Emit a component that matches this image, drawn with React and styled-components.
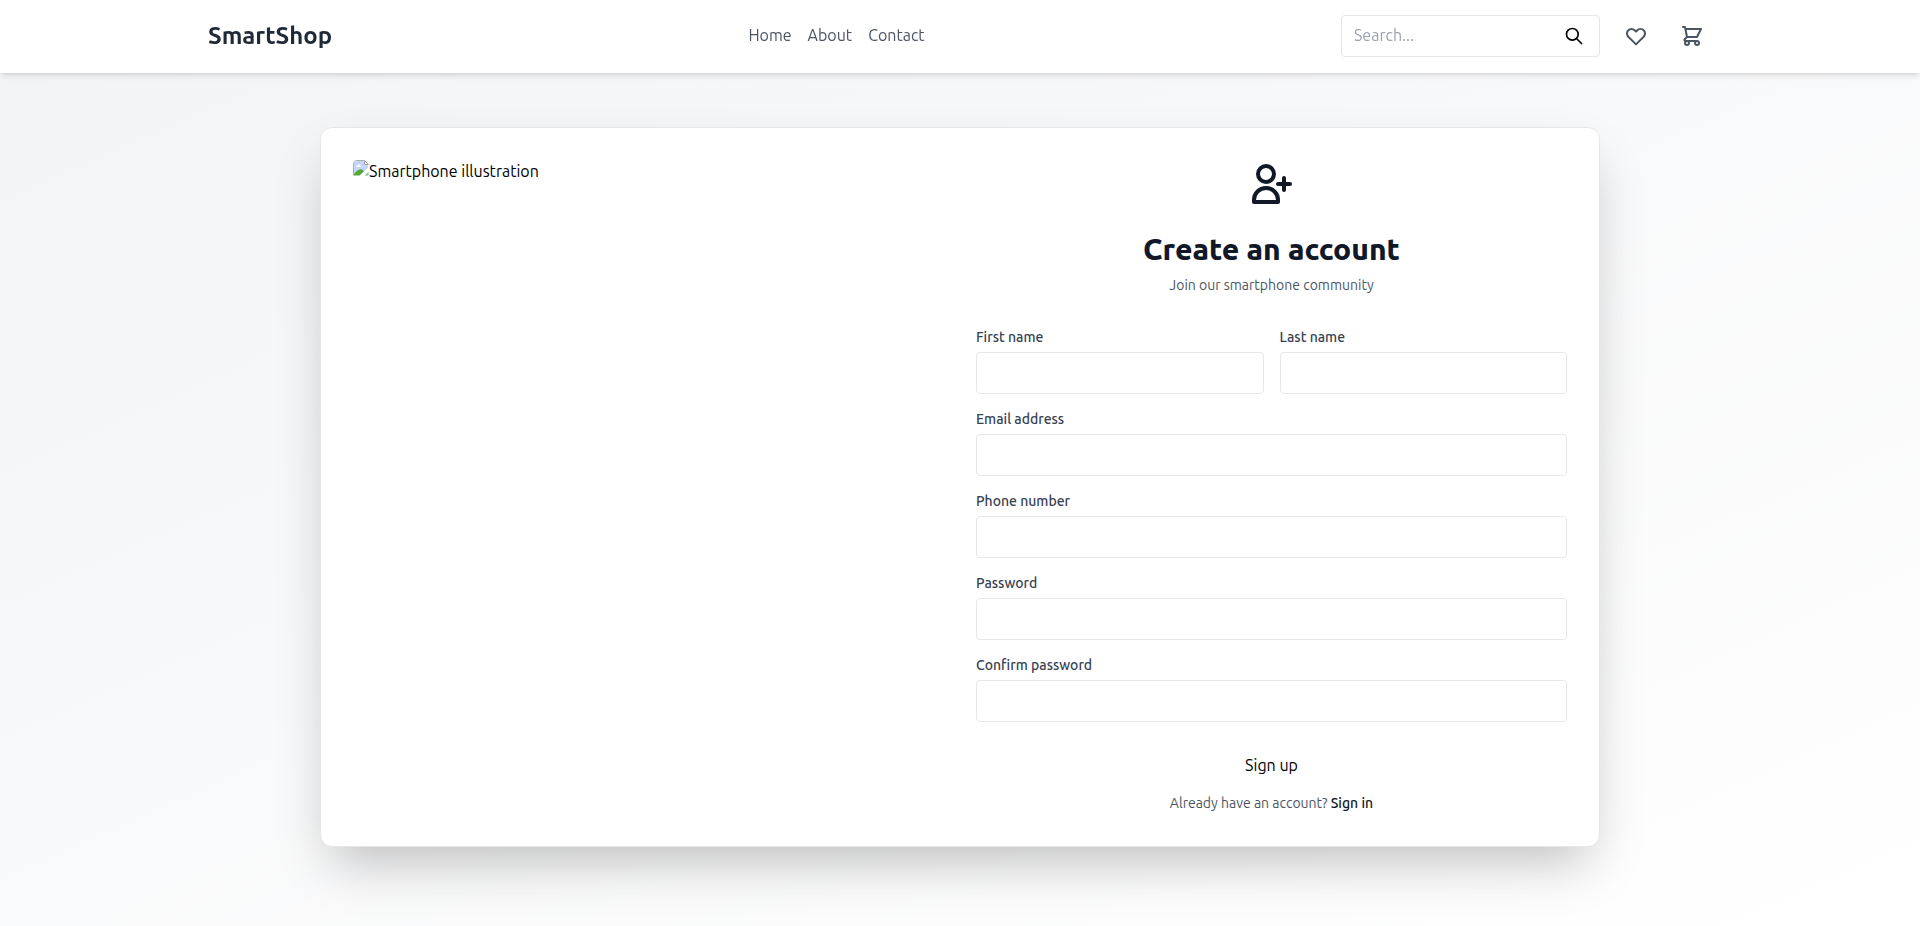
import React from "react";
import styled, { createGlobalStyle } from "styled-components";
import {
  HiOutlineHeart,
  HiOutlineSearch,
  HiOutlineShoppingCart,
  HiOutlineUserAdd,
} from "react-icons/hi";

const GlobalStyle = createGlobalStyle`
  *, *::before, *::after { box-sizing: border-box; }
  body {
    margin: 0;
    font-family: Ubuntu, "Noto Sans", sans-serif;
    font-size: 16px;
    line-height: 24px;
    color: #000;
  }
  h1, h2, p { margin: 0; }
  button, input { font: inherit; color: inherit; }
  svg { display: block; }
`;

const Page = styled.div`
  display: flex;
  flex-direction: column;
  height: 926px;
  overflow: hidden;
`;

const Header = styled.header`
  position: sticky;
  top: 0;
  z-index: 50;
  flex: none;
  height: 73px;
  padding-bottom: 1.8px;
  background: #fff;
  box-shadow: 0 4px 6px -1px rgba(0, 0, 0, 0.1), 0 2px 4px -2px rgba(0, 0, 0, 0.1);
  will-change: transform;
`;

const HeaderInner = styled.div`
  display: flex;
  align-items: center;
  justify-content: space-between;
  max-width: 1536px;
  height: 100%;
  margin: 0 auto;
  padding: 0 16px;
`;

const Logo = styled.h1`
  font-size: 24px;
  line-height: 32px;
  font-weight: 600;
  color: #1f2937;
`;

const Nav = styled.nav`
  display: flex;
  gap: 16px;
  padding-bottom: 2px;
`;

const NavLink = styled.a`
  color: #4b5563;
  text-decoration: none;
`;

const Actions = styled.div`
  display: flex;
  align-items: center;
  gap: 16px;
`;

const SearchBox = styled.div`
  display: flex;
  align-items: center;
  width: 259px;
  height: 42px;
  padding: 0 15px 0 12px;
  border: 1px solid #e5e7eb;
  border-radius: 4px;
`;

const SearchInput = styled.input`
  flex: 1;
  min-width: 0;
  padding: 0 0 2px;
  border: 0;
  outline: 0;
  background: transparent;
  &::placeholder { color: #9ca3af; opacity: 1; }
`;

const IconButton = styled.button`
  padding: 8px;
  border: 0;
  background: transparent;
  color: #4b5563;
`;

const Main = styled.main`
  flex: 1;
  padding-top: 53.6px;
  background: linear-gradient(to bottom right, #f3f4f6, #fff);
`;

const Card = styled.section`
  display: grid;
  grid-template-columns: 1fr 1fr;
  gap: 32px;
  max-width: 1280px;
  margin: 0 auto;
  padding: 32px;
  border: 1px solid #e5e7eb;
  border-radius: 12px;
  background: #fff;
  box-shadow: 0 25px 50px -12px rgba(0, 0, 0, 0.25);
`;

const Illustration = styled.div`
  display: flex;
  align-items: flex-start;
  line-height: 22px;
`;

const FormColumn = styled.div`
  display: flex;
  flex-direction: column;
`;

const Intro = styled.div`
  display: flex;
  flex-direction: column;
  align-items: center;
  margin-bottom: 32px;
  color: #111827;
`;

const Title = styled.h2`
  margin: 24px 0 10px;
  font-size: 30px;
  line-height: 34px;
  font-weight: 800;
`;

const Note = styled.p`
  padding-bottom: 2px;
  font-size: 14px;
  line-height: 18px;
  text-align: center;
  color: #4b5563;
`;

const Form = styled.form`
  display: grid;
  grid-template-columns: 1fr 1fr;
  gap: 16px;
`;

const Field = styled.label`
  display: flex;
  flex-direction: column;
  gap: 6px;
  grid-column: ${(p) => (p.$half ? "auto" : "1 / -1")};
  font-size: 14px;
  line-height: 18px;
  font-weight: 500;
  color: #374151;
`;

const Input = styled.input`
  width: 100%;
  height: 42px;
  padding: 8px 12px;
  border: 1px solid #e5e7eb;
  border-radius: 4px;
  background: #fff;
`;

const SubmitButton = styled.button`
  grid-column: 1 / -1;
  margin-top: 8px;
  padding: 7px 16px 9px;
  border: 0;
  background: transparent;
`;

const SignInNote = styled(Note)`
  margin-top: 8px;
`;

const SignInLink = styled.a`
  font-weight: 500;
  color: #111827;
`;

const FIELDS = [
  { label: "First name", half: true },
  { label: "Last name", half: true },
  { label: "Email address", type: "email" },
  { label: "Phone number", type: "tel" },
  { label: "Password", type: "password" },
  { label: "Confirm password", type: "password" },
];

function MissingImageIcon() {
  return (
    <svg width="16" height="16" viewBox="0 0 16 16">
      <path d="M.5 15.500V4Q.5.5 4 .5H11.500" fill="none" stroke="#a9b0ba" />
      <path d="M1 15V4Q1 1 4 1H11V5H15V8L7.500 15z" fill="#c3d6f7" />
      <path d="M3 7q0-1.400 1.400-1.400Q5 4 6.400 4.600 7.600 4.800 7.400 6q1 0 1 1z" fill="#fff" />
      <path d="M1 15.500V14Q5 9 8.200 9.200q1.500.2 2.600 2L6.500 15.500z" fill="#54a737" />
      <path d="M11.500.5v4h4z" fill="#fff" stroke="#a3a3a3" />
      <path d="M7 16 16 7.500v2.800L10 16z" fill="#fff" />
      <path d="M11.500 15.500h4V12z" fill="#8fbf7c" />
    </svg>
  );
}

export default function App() {
  return (
    <Page>
      <GlobalStyle />
      <Header>
        <HeaderInner>
          <Logo>SmartShop</Logo>
          <Nav>
            <NavLink>Home</NavLink>
            <NavLink>About</NavLink>
            <NavLink>Contact</NavLink>
          </Nav>
          <Actions>
            <SearchBox>
              <SearchInput placeholder="Search..." />
              <HiOutlineSearch size={20} />
            </SearchBox>
            <IconButton aria-label="Wishlist">
              <HiOutlineHeart size={24} />
            </IconButton>
            <IconButton aria-label="Cart">
              <HiOutlineShoppingCart size={24} />
            </IconButton>
          </Actions>
        </HeaderInner>
      </Header>
      <Main>
        <Card>
          <Illustration>
            <MissingImageIcon />
            <span>Smartphone illustration</span>
          </Illustration>
          <FormColumn>
            <Intro>
              <HiOutlineUserAdd size={48} />
              <Title>Create an account</Title>
              <Note>Join our smartphone community</Note>
            </Intro>
            <Form>
              {FIELDS.map(({ label, half, type = "text" }) => (
                <Field key={label} $half={half}>
                  {label}
                  <Input type={type} />
                </Field>
              ))}
              <SubmitButton type="button">Sign up</SubmitButton>
            </Form>
            <SignInNote>
              Already have an account? <SignInLink>Sign in</SignInLink>
            </SignInNote>
          </FormColumn>
        </Card>
      </Main>
    </Page>
  );
}
